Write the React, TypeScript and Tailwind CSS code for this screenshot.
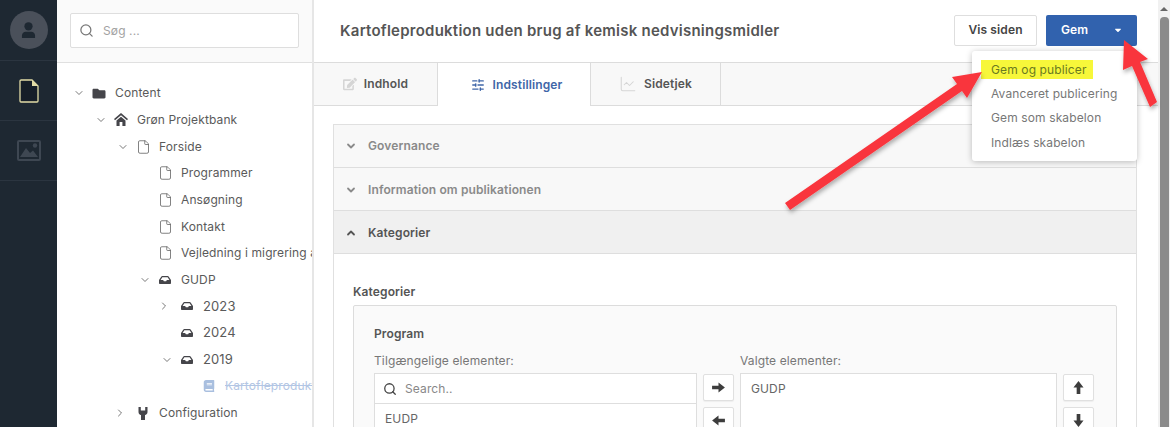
import React from "react";
import { FaFolder, FaInbox, FaBook, FaEdit, FaCaretDown } from "react-icons/fa";
import { ChevronDown, ChevronRight, ChevronUp, Search, SlidersHorizontal, ChartLine, File } from "lucide-react";

type Row = { label: string; depth: number; chev?: "d" | "r"; icon: React.ReactNode; cls?: string };

const file = <File className="w-[15px] h-[16px] text-[#666]" strokeWidth={1.3} />;
const inbox = <FaInbox className="w-[12px] h-[12px] text-[#45454a]" />;

const HomeIcon = () => (
  <svg viewBox="0 0 14 13" className="w-[14px] h-[13px] text-[#45454a]" fill="currentColor">
    <path d="M7 0 L14 6 L13 7.3 L7 2.2 L1 7.3 L0 6 Z" />
    <path d="M2.5 7.6 L7 3.8 L11.5 7.6 V13 H8.4 V9 H5.6 V13 H2.5 Z" />
  </svg>
);

const ConfigIcon = () => (
  <svg viewBox="0 0 12 13" className="w-[12px] h-[13px] text-[#45454a]" fill="currentColor">
    <path d="M1.5 0 H3.8 V3.6 H8.2 V0 H10.5 V5 C10.5 6.8 9.4 7.8 8 8.1 V13 H4 V8.1 C2.6 7.8 1.5 6.8 1.5 5 Z" />
  </svg>
);

const rows: Row[] = [
  { label: "Content", depth: 0, chev: "d", icon: <FaFolder className="w-[14px] h-[13px] text-[#45454a]" /> },
  { label: "Grøn Projektbank", depth: 1, chev: "d", icon: <HomeIcon /> },
  { label: "Forside", depth: 2, chev: "d", icon: file },
  { label: "Programmer", depth: 3, icon: file },
  { label: "Ansøgning", depth: 3, icon: file },
  { label: "Kontakt", depth: 3, icon: file },
  { label: "Vejledning i migrering af indhold", depth: 3, icon: file },
  { label: "GUDP", depth: 3, chev: "d", icon: inbox },
  { label: "2023", depth: 4, chev: "r", icon: inbox, cls: "text-[13px]" },
  { label: "2024", depth: 4, icon: inbox, cls: "text-[13px]" },
  { label: "2019", depth: 4, chev: "d", icon: inbox, cls: "text-[13px]" },
  { label: "Kartofleproduktion uden brug", depth: 5, icon: <FaBook className="w-[12px] h-[12px] text-[#a9bfdf]" />, cls: "text-[#b3c6e4] line-through" },
  { label: "Configuration", depth: 2, chev: "r", icon: <ConfigIcon /> },
];

const indent = ["pl-[16px]", "pl-[38px]", "pl-[60px]", "pl-[82px]", "pl-[104px]", "pl-[126px]"];

function TreeRow({ r }: { r: Row }) {
  return (
    <div className={`flex items-center h-[26.65px] whitespace-nowrap ${indent[r.depth]}`}>
      <span className={`shrink-0 flex items-center ${r.chev === "r" ? "w-[21px] -ml-[3px]" : "w-[18px]"}`}>
        {r.chev === "d" && <ChevronDown className="w-[12px] h-[12px] text-[#555]" strokeWidth={1.6} />}
        {r.chev === "r" && <ChevronRight className="w-[12px] h-[12px] text-[#555]" strokeWidth={1.6} />}
      </span>
      <span className="w-[16px] shrink-0 flex items-center justify-center mr-[8px]">{r.icon}</span>
      <span className={`text-[#5a5a5a] ${r.cls ?? ""}`}>{r.label}</span>
    </div>
  );
}

function Tab({ icon, label, active, w }: { icon: React.ReactNode; label: string; active?: boolean; w: string }) {
  return (
    <div className={`${w} flex items-center justify-center gap-[7px] border-r border-[#dcdcdc] font-semibold h-[43px] ${active ? "bg-white text-[#3f66a8] pl-[4px]" : "border-b text-[#555]"}`}>
      {icon}
      <span>{label}</span>
    </div>
  );
}

function Acc({ label, open, low }: { label: string; open?: boolean; low?: boolean }) {
  return (
    <div className={`flex items-center h-[43px] pl-[11px] gap-[11px] border-b border-[#dedede] font-semibold ${low ? "pt-px" : ""} ${open ? "bg-[#f0f0f0] text-[#555]" : "bg-[#f8f8f8] text-[#8a8a8a]"}`}>
      {open ? <ChevronUp className="w-[12px] h-[12px]" strokeWidth={3.6} /> : <ChevronDown className="w-[12px] h-[12px]" strokeWidth={3.6} />}
      <span>{label}</span>
    </div>
  );
}

const HeavyArrow = ({ cls }: { cls: string }) => (
  <svg viewBox="0 0 14 12" className={`w-[13px] h-[11px] ${cls}`} fill="#3d3d3d">
    <path d="M0 4 H7 V0.5 L14 6 L7 11.5 V8 H0 Z" />
  </svg>
);

function SmallBtn({ cls }: { cls: string }) {
  return (
    <div className="w-[31px] h-[27px] bg-white border border-[#e0e0e0] rounded-[2px] flex items-center justify-center shadow-[0_1px_1px_rgba(0,0,0,0.05)]">
      <HeavyArrow cls={cls} />
    </div>
  );
}

export default function App() {
  return (
    <div className="relative flex w-[1170px] h-[427px] overflow-hidden bg-white text-[12px] tracking-[0.12px] font-['Inter',sans-serif]">
      {/* rail */}
      <aside className="w-[57px] shrink-0 bg-[#1e2832] flex flex-col">
        <div className="h-[61px] border-b border-[#2b3540] flex items-center justify-center">
          <div className="w-[38px] h-[38px] rounded-full bg-[#4a505a] flex items-center justify-center">
            <svg viewBox="0 0 16 18" className="w-[15px] h-[18px]" fill="#1e2832">
              <circle cx="8" cy="5" r="4.4" />
              <path d="M1 17.5 V15 C1 12.4 3 10.8 5 10.8 H11 C13 10.8 15 12.4 15 15 V17.5 Z" />
            </svg>
          </div>
        </div>
        <div className="h-[60px] border-b border-[#2b3540] flex items-center justify-center">
          <svg viewBox="0 0 20 24" className="w-[20px] h-[24px]" fill="none">
            <path d="M1.5 1 H13 L19 7 V22 Q19 23 18 23 H2 Q1 23 1 22 V2 Q1 1 2 1 Z" stroke="#e2dca6" strokeWidth="1.3" fill="#161e28" />
            <path d="M13 1 V7 H19 Z" fill="#e2dca6" />
          </svg>
        </div>
        <div className="h-[60px] border-b border-[#2b3540] flex items-center justify-center">
          <svg viewBox="0 0 24 21" className="w-[24px] h-[21px]" fill="#3e4752">
            <path fillRule="evenodd" d="M2 0 H22 Q24 0 24 2 V19 Q24 21 22 21 H2 Q0 21 0 19 V2 Q0 0 2 0 Z M2 2 V19 H22 V2 Z" />
            <circle cx="18" cy="5.5" r="2.2" />
            <path d="M3 17 L9 8 L13 13 L16 10.5 L21 17 Z" />
          </svg>
        </div>
      </aside>

      {/* tree */}
      <section className="w-[257px] shrink-0 border-r-2 border-[#e6e6e6] flex flex-col overflow-hidden">
        <div className="h-[63px] shrink-0 bg-[#fafafa] border-b border-[#e0e0e0] px-[13px] flex items-center">
          <div className="w-[230px] h-[35px] bg-white border border-[#dedede] rounded-[2px] flex items-center pl-[8px] gap-[9px] mb-[1px] text-[#a3a3a3]">
            <Search className="w-[15px] h-[15px] text-[#777]" strokeWidth={2} />
            <span>Søg ...</span>
          </div>
        </div>
        <div className="pt-[17px] overflow-hidden">
          {rows.map((r) => (
            <TreeRow key={r.label} r={r} />
          ))}
        </div>
      </section>

      {/* main */}
      <main className="flex-1 min-w-0 flex flex-col">
        <header className="h-[63px] shrink-0 bg-white border-b border-[#dcdcdc] flex items-center pl-[26px] pr-[21px]">
          <h1 className="flex-1 text-[15px] font-semibold text-[#555] tracking-[0.24px]">Kartofleproduktion uden brug af kemisk nedvisningsmidler</h1>
          <div className="flex gap-[9px] mb-[2px]">
            <div className="w-[83px] h-[31px] border border-[#dedede] rounded-[2px] flex items-center justify-center font-semibold text-[#444]">Vis siden</div>
            <div className="w-[91px] h-[31px] bg-[#3162ae] rounded-[2px] flex items-center text-white font-semibold pl-[15px]">
              <span className="flex-1">Gem</span>
              <FaCaretDown className="w-[10px] h-[10px] mr-[14px]" />
            </div>
          </div>
        </header>

        <div className="flex shrink-0 bg-[#f8f8f8]">
          <Tab w="w-[124px]" label="Indhold" icon={<FaEdit className="w-[14px] h-[14px] text-[#d5d5d5]" />} />
          <Tab w="w-[153px]" active label="Indstillinger" icon={<SlidersHorizontal className="w-[16px] h-[14px] text-[#3f66a8]" strokeWidth={2.4} />} />
          <Tab w="w-[130px]" label="Sidetjek" icon={<ChartLine className="w-[18px] h-[18px] text-[#d5d5d5]" strokeWidth={1.4} />} />
          <div className="flex-1 border-b border-[#dcdcdc]" />
        </div>

        <div className="flex-1 min-h-0 pl-[19px] pr-[21px] pt-[18px] overflow-hidden">
          <div className="border border-[#e0e0e0] h-[400px]">
            <Acc label="Governance" />
            <Acc label="Information om publikationen" low />
            <Acc label="Kategorier" open low />
            <div className="px-[19px] pt-[29px]">
              <div className="font-semibold text-[#555] mb-[4px]">Kategorier</div>
              <div className="border border-[#dcdcdc] rounded-[2px] bg-[#fafafa] px-[20px] pt-[19px] h-[200px]">
                <div className="font-semibold text-[#555] mb-[10px]">Program</div>
                <div className="flex gap-[6px]">
                  <div className="w-[323px]">
                    <div className="text-[#777] mb-[5px] h-[15px] leading-[15px]">Tilgængelige elementer:</div>
                    <div className="border border-[#dedede] bg-white">
                      <div className="h-[30px] flex items-center pl-[8px] gap-[8px] border-b border-[#dedede] text-[#888]">
                        <Search className="w-[14px] h-[14px] text-[#444]" strokeWidth={2.2} />
                        <span>Search..</span>
                      </div>
                      <div className="h-[30px] flex items-center pl-[10px] text-[#666]">EUDP</div>
                    </div>
                  </div>
                  <div className="pt-[21px] flex flex-col gap-[6px]">
                    <SmallBtn cls="" />
                    <SmallBtn cls="rotate-180" />
                  </div>
                  <div className="w-[317px]">
                    <div className="text-[#777] mb-[5px] h-[15px] leading-[15px]">Valgte elementer:</div>
                    <div className="border border-[#dedede] bg-white h-[80px] pl-[10px] pt-[6px] text-[#666]">GUDP</div>
                  </div>
                  <div className="pt-[21px] flex flex-col gap-[6px]">
                    <SmallBtn cls="-rotate-90" />
                    <SmallBtn cls="rotate-90" />
                  </div>
                </div>
              </div>
            </div>
          </div>
        </div>
      </main>

      {/* scrollbar */}
      <div className="w-[12px] shrink-0 bg-[#f1f1f1] flex flex-col items-center">
        <div className="h-[17px] flex items-center justify-center">
          <div className="w-0 h-0 border-x-[4px] border-x-transparent border-b-[4px] border-b-[#666]" />
        </div>
        <div className="w-[9px] flex-1 bg-[#8b8b8b] rounded-t-[4px]" />
      </div>

      {/* dropdown */}
      <div className="absolute left-[972px] top-[51px] w-[165px] h-[110px] bg-white rounded-[3px] shadow-[0_1px_6px_rgba(0,0,0,0.25)] pl-[19px] pt-[6px] text-[#777] whitespace-nowrap">
        <div className="h-[24.6px] flex items-center"><span className="bg-[#f7f73a] text-[#6a7a20] -ml-[10px] pl-[10px] h-[19px] leading-[19px] w-[112px]">Gem og publicer</span></div>
        <div className="h-[24.6px] flex items-center">Avanceret publicering</div>
        <div className="h-[24.6px] flex items-center">Gem som skabelon</div>
        <div className="h-[24.6px] flex items-center">Indlæs skabelon</div>
      </div>

      {/* annotation arrows */}
      <svg className="absolute left-0 top-0 pointer-events-none" width="1170" height="427" viewBox="0 0 1170 427">
        <defs>
          <filter id="s" x="-20%" y="-20%" width="140%" height="140%">
            <feDropShadow dx="1" dy="3" stdDeviation="2" floodColor="#000" floodOpacity="0.3" />
          </filter>
        </defs>
        <polygon filter="url(#s)" fill="#f9353c" points="785,203 790,210 962,91 967,98 982,72 952,77 957,84" />
        <polygon filter="url(#s)" fill="#f9353c" points="1124,40 1148,59 1140,62 1157,102 1150,107 1132,66 1123,70" />
      </svg>
    </div>
  );
}
